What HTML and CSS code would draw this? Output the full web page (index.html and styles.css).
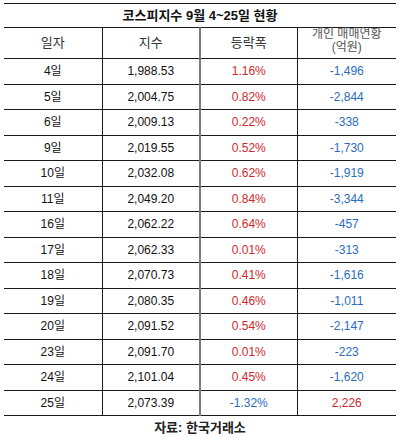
FILE: index.html
```html
<!DOCTYPE html>
<html lang="ko">
<head>
  <meta charset="UTF-8">
  <meta name="viewport" content="width=device-width, initial-scale=1.0">
  <title>코스피지수 9월 현황</title>
  <link rel="stylesheet" href="styles.css">
</head>
<body>
  <table class="kospi">
    <colgroup>
      <col class="c1"><col class="c2"><col class="c3"><col class="c4">
    </colgroup>
    <thead>
      <tr class="title"><th colspan="4">코스피지수 9월 4~25일 현황</th></tr>
      <tr class="head">
        <th>일자</th>
        <th>지수</th>
        <th class="mid">등락폭</th>
        <th class="two">개인 매매연황<br>(억원)</th>
      </tr>
    </thead>
    <tbody>
      <tr><td>4일</td><td>1,988.53</td><td class="mid up">1.16%</td><td class="down">-1,496</td></tr>
      <tr><td>5일</td><td>2,004.75</td><td class="mid up">0.82%</td><td class="down">-2,844</td></tr>
      <tr><td>6일</td><td>2,009.13</td><td class="mid up">0.22%</td><td class="down">-338</td></tr>
      <tr><td>9일</td><td>2,019.55</td><td class="mid up">0.52%</td><td class="down">-1,730</td></tr>
      <tr><td>10일</td><td>2,032.08</td><td class="mid up">0.62%</td><td class="down">-1,919</td></tr>
      <tr><td>11일</td><td>2,049.20</td><td class="mid up">0.84%</td><td class="down">-3,344</td></tr>
      <tr><td>16일</td><td>2,062.22</td><td class="mid up">0.64%</td><td class="down">-457</td></tr>
      <tr><td>17일</td><td>2,062.33</td><td class="mid up">0.01%</td><td class="down">-313</td></tr>
      <tr><td>18일</td><td>2,070.73</td><td class="mid up">0.41%</td><td class="down">-1,616</td></tr>
      <tr><td>19일</td><td>2,080.35</td><td class="mid up">0.46%</td><td class="down">-1,011</td></tr>
      <tr><td>20일</td><td>2,091.52</td><td class="mid up">0.54%</td><td class="down">-2,147</td></tr>
      <tr><td>23일</td><td>2,091.70</td><td class="mid up">0.01%</td><td class="down">-223</td></tr>
      <tr><td>24일</td><td>2,101.04</td><td class="mid up">0.45%</td><td class="down">-1,620</td></tr>
      <tr><td>25일</td><td>2,073.39</td><td class="mid down">-1.32%</td><td class="up">2,226</td></tr>
    </tbody>
    <tfoot>
      <tr class="source"><td colspan="4">자료: 한국거래소</td></tr>
    </tfoot>
  </table>
</body>
</html>
```

FILE: styles.css
```css
*{
  margin: 0;
  padding: 0;
  box-sizing: border-box;
}

body{
  background: #fff;
  padding: 3px 4px 0 4px;
  font-family: "Liberation Sans", "Noto Sans CJK KR", sans-serif;
  font-size: 12px;
  color: #111;
}

.kospi{
  width: 392px;
  border-collapse: collapse;
  table-layout: fixed;
}
.kospi .c1{ width: 98px; }
.kospi .c2{ width: 98px; }
.kospi .c3{ width: 97px; }
.kospi .c4{ width: 99px; }

.kospi th,
.kospi td{
  text-align: center;
  vertical-align: middle;
  border-top: 1px solid #1a1a1a;
  border-bottom: 1px solid #1a1a1a;
  border-left: 1px solid #1a1a1a;
  font-weight: normal;
  height: 25.5px;
  line-height: 14px;
}
.kospi th:first-child,
.kospi td:first-child{
  border-left: none;
}
.kospi .mid{
  border-left: 2px solid #7a7a7a;
}

.title th{
  height: 24px;
  font-weight: bold;
  font-size: 13px;
  border-left: none;
}
.head th{
  height: 26px;
  font-size: 13px;
  color: #333;
}
.head .two{
  font-size: 12px;
  line-height: 13px;
  color: #555;
  padding-bottom: 4px;
}

.up{ color: #d0282b; }
.down{ color: #2b6cbb; }

.source td{
  height: 25px;
  font-weight: bold;
  font-size: 13px;
  color: #222;
}
```
